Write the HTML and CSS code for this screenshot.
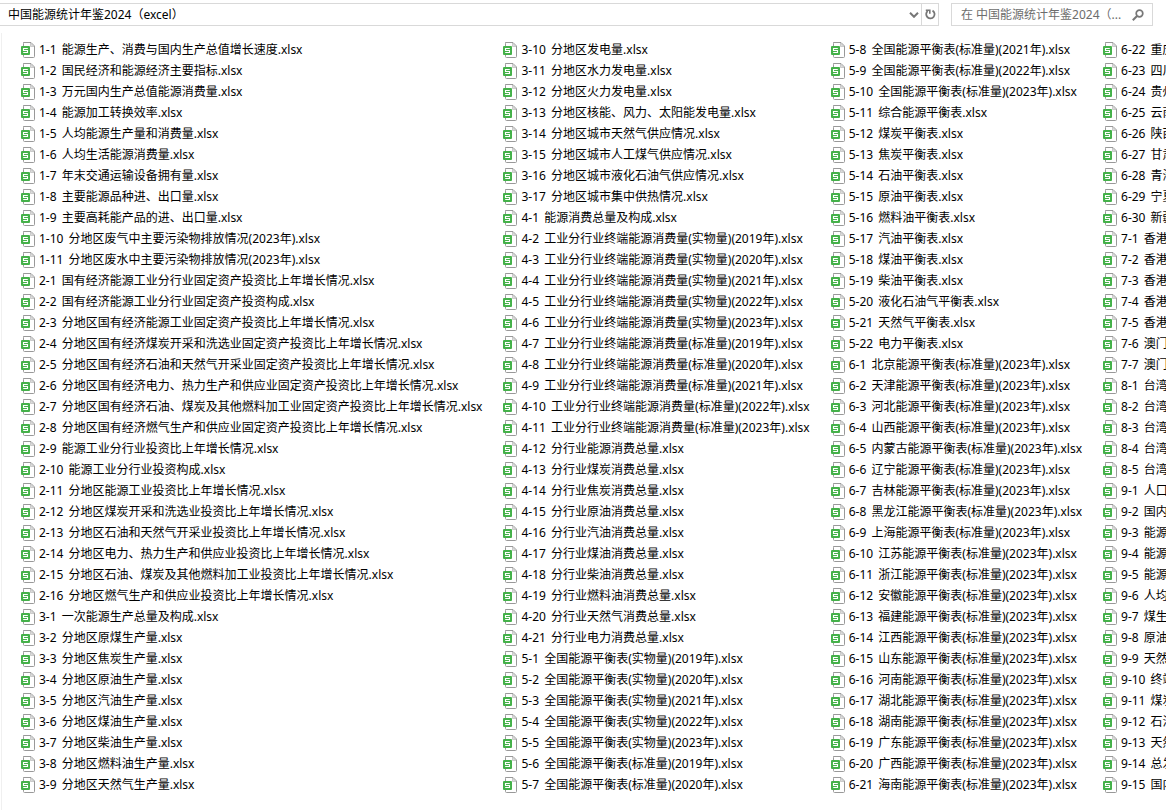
FILE: index.html
```html
<!DOCTYPE html>
<html lang="zh-CN">

<head>
  <meta charset="UTF-8">
  <meta name="viewport" content="width=device-width, initial-scale=1.0">
  <title>中国能源统计年鉴2024（excel）</title>
  <link rel="stylesheet" href="styles.css">
</head>

<body>
  <svg class="defs" aria-hidden="true">
    <symbol id="xlsx" viewBox="0 0 14 16">
      <path d="M2.5 .5h7.500l3.500 3.500v10.500q0 1-1 1h-9q-1 0-1-1v-13q0-1 1-1z" fill="#fff" stroke="#999" />
      <path d="M9.500 1v3.500h3.500z" fill="#ddd" stroke="#b4b4b4" stroke-width=".6" />
      <rect x="0" y="4" width="9" height="9" rx="1" fill="#44b149" />
      <path d="M6.800 6.500h-4.300v2h4v2h-4.300" fill="none" stroke="#fff" stroke-width="1.100" />
    </symbol>
  </svg>

  <header class="toolbar">
    <div class="address">
      <input class="path" type="text" aria-label="地址" value="中国能源统计年鉴2024（excel）">
      <button class="drop" aria-label="以前的位置">
        <svg width="10" height="6" viewBox="0 0 10 6"><path d="M1 .8l4 4 4-4" fill="none" stroke="#777" stroke-width="2" /></svg>
      </button>
      <button class="refresh" aria-label="刷新">
        <svg width="11" height="11" viewBox="0 0 11 11">
          <path d="M7.500 1.600a4.200 4.200 0 1 1-4.800.4" fill="none" stroke="#777" stroke-width="1.800" />
          <path d="M.8 1.200h4v3.600" fill="none" stroke="#777" stroke-width="1.600" />
        </svg>
      </button>
    </div>
    <div class="search">
      <input type="text" aria-label="搜索" placeholder="在 中国能源统计年鉴2024（...">
      <button aria-label="开始搜索">
        <svg width="12" height="12" viewBox="0 0 12 12">
          <circle cx="7.500" cy="4.500" r="3.300" fill="none" stroke="#777" stroke-width="1.700" />
          <path d="M5 7l-4.200 4.200" stroke="#777" stroke-width="2" />
        </svg>
      </button>
    </div>
  </header>

  <main class="pane">
    <ul class="files" id="files"></ul>
  </main>

  <script src="files.js"></script>
</body>

</html>
```
FILE: styles.css
```css
* {
  box-sizing: border-box;
}

body {
  margin: 0;
  padding-top: 3px;
  height: 100vh;
  display: flex;
  flex-direction: column;
  overflow: hidden;
  background: #fff;
  color: #000;
  font: 12px/21px "Noto Sans", "Noto Sans CJK SC", sans-serif;
}

input,
button {
  margin: 0;
  padding: 0;
  border: 0;
  outline: 0;
  background: none;
  color: inherit;
  font: inherit;
}

button {
  display: flex;
  align-items: center;
  justify-content: center;
}

.defs {
  position: absolute;
  width: 0;
  height: 0;
}

/* address bar and search box */
.toolbar {
  display: flex;
  gap: 12px;
  padding-right: 13px;
}

.address,
.search {
  display: flex;
  height: 23px;
  border: 1px solid #d9d9d9;
}

.address {
  flex: 1;
  border-left: 0;
}

.path {
  flex: 1;
  min-width: 0;
  padding-left: 8px;
}

.drop {
  width: 14px;
}

.refresh {
  width: 17px;
  border-left: 1px solid #d9d9d9;
}

.search {
  width: 202px;
  color: #6d6d6d;
}

.search input {
  flex: 1;
  min-width: 0;
  padding-left: 9px;
}

.search input::placeholder {
  color: #6d6d6d;
  opacity: 1;
}

.search button {
  width: 28px;
}

/* file list, fills column by column */
.pane {
  flex: 1;
  margin: 7px 0 0 1px;
  padding: 6px 0 0 19px;
  border-left: 1px solid #f0f0f0;
  overflow: hidden;
}

.files {
  display: grid;
  grid-auto-flow: column;
  grid-template-rows: repeat(36, 21px);
  grid-auto-columns: max-content;
  column-gap: 21px;
  margin: 0;
  padding: 0;
  list-style: none;
}

.files a {
  display: flex;
  align-items: center;
  gap: 4px;
  color: inherit;
  text-decoration: none;
  white-space: nowrap;
}

.files svg {
  width: 14px;
  height: 16px;
}

.no {
  margin-right: 2px;
}
```
FILE: files.js
```js
const names = [
  '1-1 能源生产、消费与国内生产总值增长速度',
  '1-2 国民经济和能源经济主要指标',
  '1-3 万元国内生产总值能源消费量',
  '1-4 能源加工转换效率',
  '1-5 人均能源生产量和消费量',
  '1-6 人均生活能源消费量',
  '1-7 年末交通运输设备拥有量',
  '1-8 主要能源品种进、出口量',
  '1-9 主要高耗能产品的进、出口量',
  '1-10 分地区废气中主要污染物排放情况(2023年)',
  '1-11 分地区废水中主要污染物排放情况(2023年)',
  '2-1 国有经济能源工业分行业固定资产投资比上年增长情况',
  '2-2 国有经济能源工业分行业固定资产投资构成',
  '2-3 分地区国有经济能源工业固定资产投资比上年增长情况',
  '2-4 分地区国有经济煤炭开采和洗选业固定资产投资比上年增长情况',
  '2-5 分地区国有经济石油和天然气开采业固定资产投资比上年增长情况',
  '2-6 分地区国有经济电力、热力生产和供应业固定资产投资比上年增长情况',
  '2-7 分地区国有经济石油、煤炭及其他燃料加工业固定资产投资比上年增长情况',
  '2-8 分地区国有经济燃气生产和供应业固定资产投资比上年增长情况',
  '2-9 能源工业分行业投资比上年增长情况',
  '2-10 能源工业分行业投资构成',
  '2-11 分地区能源工业投资比上年增长情况',
  '2-12 分地区煤炭开采和洗选业投资比上年增长情况',
  '2-13 分地区石油和天然气开采业投资比上年增长情况',
  '2-14 分地区电力、热力生产和供应业投资比上年增长情况',
  '2-15 分地区石油、煤炭及其他燃料加工业投资比上年增长情况',
  '2-16 分地区燃气生产和供应业投资比上年增长情况',
  '3-1 一次能源生产总量及构成',
  '3-2 分地区原煤生产量',
  '3-3 分地区焦炭生产量',
  '3-4 分地区原油生产量',
  '3-5 分地区汽油生产量',
  '3-6 分地区煤油生产量',
  '3-7 分地区柴油生产量',
  '3-8 分地区燃料油生产量',
  '3-9 分地区天然气生产量',
  '3-10 分地区发电量',
  '3-11 分地区水力发电量',
  '3-12 分地区火力发电量',
  '3-13 分地区核能、风力、太阳能发电量',
  '3-14 分地区城市天然气供应情况',
  '3-15 分地区城市人工煤气供应情况',
  '3-16 分地区城市液化石油气供应情况',
  '3-17 分地区城市集中供热情况',
  '4-1 能源消费总量及构成',
  '4-2 工业分行业终端能源消费量(实物量)(2019年)',
  '4-3 工业分行业终端能源消费量(实物量)(2020年)',
  '4-4 工业分行业终端能源消费量(实物量)(2021年)',
  '4-5 工业分行业终端能源消费量(实物量)(2022年)',
  '4-6 工业分行业终端能源消费量(实物量)(2023年)',
  '4-7 工业分行业终端能源消费量(标准量)(2019年)',
  '4-8 工业分行业终端能源消费量(标准量)(2020年)',
  '4-9 工业分行业终端能源消费量(标准量)(2021年)',
  '4-10 工业分行业终端能源消费量(标准量)(2022年)',
  '4-11 工业分行业终端能源消费量(标准量)(2023年)',
  '4-12 分行业能源消费总量',
  '4-13 分行业煤炭消费总量',
  '4-14 分行业焦炭消费总量',
  '4-15 分行业原油消费总量',
  '4-16 分行业汽油消费总量',
  '4-17 分行业煤油消费总量',
  '4-18 分行业柴油消费总量',
  '4-19 分行业燃料油消费总量',
  '4-20 分行业天然气消费总量',
  '4-21 分行业电力消费总量',
  '5-1 全国能源平衡表(实物量)(2019年)',
  '5-2 全国能源平衡表(实物量)(2020年)',
  '5-3 全国能源平衡表(实物量)(2021年)',
  '5-4 全国能源平衡表(实物量)(2022年)',
  '5-5 全国能源平衡表(实物量)(2023年)',
  '5-6 全国能源平衡表(标准量)(2019年)',
  '5-7 全国能源平衡表(标准量)(2020年)',
  '5-8 全国能源平衡表(标准量)(2021年)',
  '5-9 全国能源平衡表(标准量)(2022年)',
  '5-10 全国能源平衡表(标准量)(2023年)',
  '5-11 综合能源平衡表',
  '5-12 煤炭平衡表',
  '5-13 焦炭平衡表',
  '5-14 石油平衡表',
  '5-15 原油平衡表',
  '5-16 燃料油平衡表',
  '5-17 汽油平衡表',
  '5-18 煤油平衡表',
  '5-19 柴油平衡表',
  '5-20 液化石油气平衡表',
  '5-21 天然气平衡表',
  '5-22 电力平衡表'
];

// chapter 6: one energy balance per province
const provinces = ['北京', '天津', '河北', '山西', '内蒙古', '辽宁', '吉林', '黑龙江', '上海', '江苏',
  '浙江', '安徽', '福建', '江西', '山东', '河南', '湖北', '湖南', '广东', '广西',
  '海南', '重庆', '四川', '贵州', '云南', '陕西', '甘肃', '青海', '宁夏', '新疆'];
provinces.forEach((p, i) => names.push(`6-${i + 1} ${p}能源平衡表(标准量)(2023年)`));

names.push(
  '7-1 香港能源',
  '7-2 香港能源',
  '7-3 香港能源',
  '7-4 香港能源',
  '7-5 香港能源',
  '7-6 澳门能源',
  '7-7 澳门能源',
  '8-1 台湾能源',
  '8-2 台湾能源',
  '8-3 台湾能源',
  '8-4 台湾能源',
  '8-5 台湾能源',
  '9-1 人口',
  '9-2 国内生产总值',
  '9-3 能源生产量',
  '9-4 能源消费量',
  '9-5 能源平衡表',
  '9-6 人均能源',
  '9-7 煤生产量',
  '9-8 原油生产量',
  '9-9 天然气生产量',
  '9-10 终端消费量',
  '9-11 煤炭消费量',
  '9-12 石油消费量',
  '9-13 天然气消费量',
  '9-14 总发电量',
  '9-15 国内能源'
);

document.getElementById('files').innerHTML = names.map(name => {
  const [no, title] = name.split(' ');
  return `<li><a href="#"><svg aria-hidden="true"><use href="#xlsx"/></svg><span><span class="no">${no}</span> ${title}.xlsx</span></a></li>`;
}).join('');
```
